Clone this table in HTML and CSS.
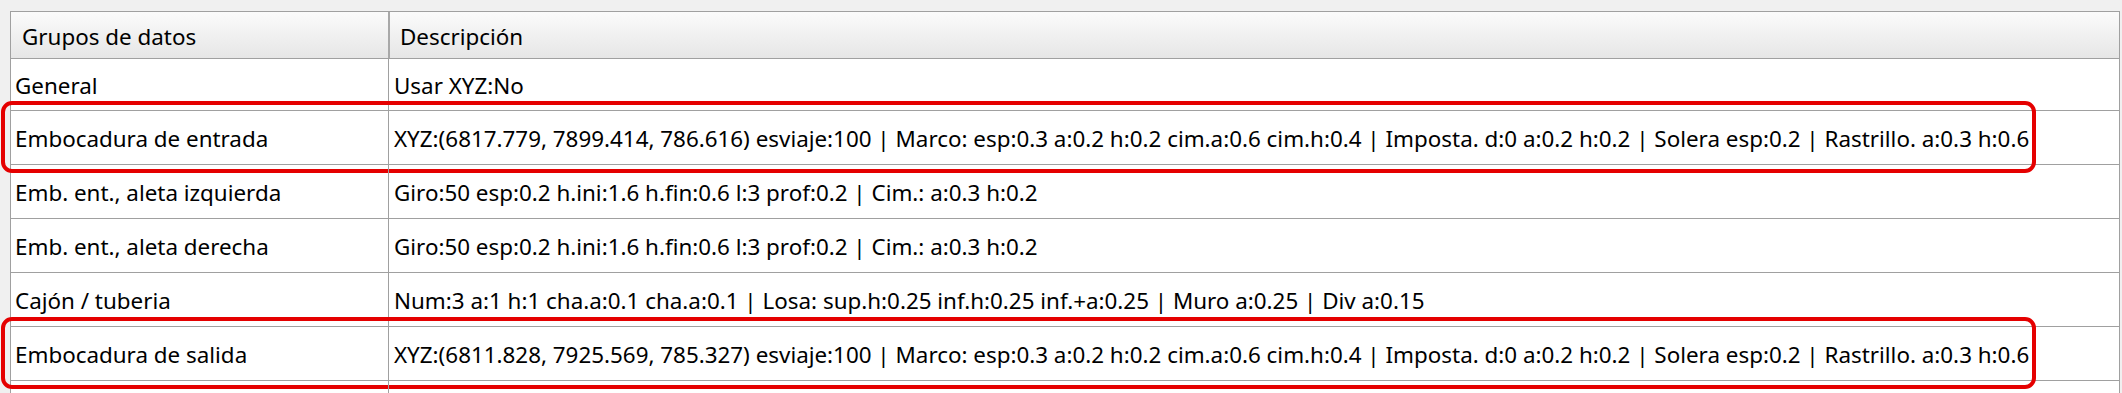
FILE: index.html
```html
<!DOCTYPE html>
<html lang="es">
<head>
<meta charset="utf-8">
<title>Grupos de datos</title>
<link rel="stylesheet" href="styles.css">
</head>
<body>
<div class="grid">
  <div class="hdr">
    <div class="hcell">Grupos de datos</div>
    <div class="hcell">Descripción</div>
  </div>
  <div class="row first">
    <div class="cell name">General</div>
    <div class="cell desc">Usar XYZ:No</div>
  </div>
  <div class="row marked">
    <div class="cell name">Embocadura de entrada</div>
    <div class="cell desc">XYZ:(6817.779, 7899.414, 786.616) esviaje:100 | Marco: esp:0.3 a:0.2 h:0.2 cim.a:0.6 cim.h:0.4 | Imposta. d:0 a:0.2 h:0.2 | Solera esp:0.2 | Rastrillo. a:0.3 h:0.6</div>
    <span class="mark"></span>
  </div>
  <div class="row">
    <div class="cell name">Emb. ent., aleta izquierda</div>
    <div class="cell desc">Giro:50 esp:0.2 h.ini:1.6 h.fin:0.6 l:3 prof:0.2 | Cim.: a:0.3 h:0.2</div>
  </div>
  <div class="row">
    <div class="cell name">Emb. ent., aleta derecha</div>
    <div class="cell desc">Giro:50 esp:0.2 h.ini:1.6 h.fin:0.6 l:3 prof:0.2 | Cim.: a:0.3 h:0.2</div>
  </div>
  <div class="row">
    <div class="cell name">Cajón / tuberia</div>
    <div class="cell desc">Num:3 a:1 h:1 cha.a:0.1 cha.a:0.1 | Losa: sup.h:0.25 inf.h:0.25 inf.+a:0.25 | Muro a:0.25 | Div a:0.15</div>
  </div>
  <div class="row marked">
    <div class="cell name">Embocadura de salida</div>
    <div class="cell desc">XYZ:(6811.828, 7925.569, 785.327) esviaje:100 | Marco: esp:0.3 a:0.2 h:0.2 cim.a:0.6 cim.h:0.4 | Imposta. d:0 a:0.2 h:0.2 | Solera esp:0.2 | Rastrillo. a:0.3 h:0.6</div>
    <span class="mark"></span>
  </div>
  <div class="row">
    <div class="cell name"></div>
    <div class="cell desc"></div>
  </div>
</div>
</body>
</html>
```
FILE: styles.css
```css
html, body {
  margin: 0;
  padding: 0;
  background: #f0f0f0;
  overflow: hidden;
}
body {
  font-family: "Noto Sans", "Open Sans", sans-serif;
  font-size: 22.4px;
  color: #000;
  padding: 11px 2px 0 10px;
}
.grid {
  background: #fff;
  border-left: 1px solid #a0a0a0;
  border-right: 1px solid #a0a0a0;
  border-top: 1px solid #a0a0a0;
}
.hdr, .row {
  display: grid;
  grid-template-columns: 377px 1fr;
}
.hdr {
  height: 46px;
  border-bottom: 1px solid #a0a0a0;
  background: linear-gradient(#fbfbfb, #e6e6e6);
}
.hcell {
  display: flex;
  align-items: center;
  padding-left: 11px;
  padding-top: 4px;
  line-height: 1;
}
.hcell + .hcell {
  border-left: 2px solid #a8a8a8;
  padding-left: 10px;
}
.row {
  position: relative;
  height: 53px;
  border-bottom: 1px solid #a0a0a0;
}
.row.first {
  height: 51px;
}
.cell {
  display: flex;
  align-items: center;
  white-space: nowrap;
  line-height: 1;
  padding-top: 3px;
}
.name {
  padding-left: 4px;
}
.desc {
  border-left: 1px solid #a0a0a0;
  padding-left: 5px;
}
.mark {
  position: absolute;
  left: -10px;
  top: -10px;
  width: 2027px;
  height: 64px;
  border: 4px solid #e50000;
  border-radius: 11px;
  pointer-events: none;
}
```
